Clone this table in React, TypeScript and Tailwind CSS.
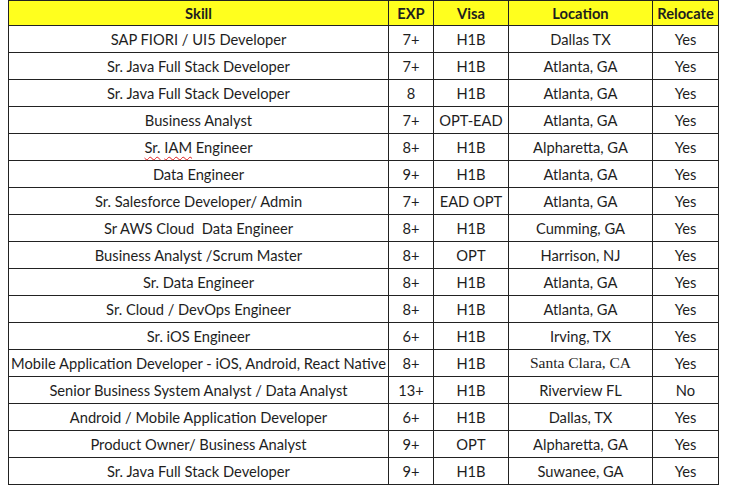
const rows: [string, string, string, string, string][] = [
  ['SAP FIORI / UI5 Developer', '7+', 'H1B', 'Dallas TX', 'Yes'],
  ['Sr. Java Full Stack Developer', '7+', 'H1B', 'Atlanta, GA', 'Yes'],
  ['Sr. Java Full Stack Developer', '8', 'H1B', 'Atlanta, GA', 'Yes'],
  ['Business Analyst', '7+', 'OPT-EAD', 'Atlanta, GA', 'Yes'],
  ['Sr. IAM Engineer', '8+', 'H1B', 'Alpharetta, GA', 'Yes'],
  ['Data Engineer', '9+', 'H1B', 'Atlanta, GA', 'Yes'],
  ['Sr. Salesforce Developer/ Admin', '7+', 'EAD OPT', 'Atlanta, GA', 'Yes'],
  ['Sr AWS Cloud  Data Engineer', '8+', 'H1B', 'Cumming, GA', 'Yes'],
  ['Business Analyst /Scrum Master', '8+', 'OPT', 'Harrison, NJ', 'Yes'],
  ['Sr. Data Engineer', '8+', 'H1B', 'Atlanta, GA', 'Yes'],
  ['Sr. Cloud / DevOps Engineer', '8+', 'H1B', 'Atlanta, GA', 'Yes'],
  ['Sr. iOS Engineer', '6+', 'H1B', 'Irving, TX', 'Yes'],
  ['Mobile Application Developer - iOS, Android, React Native', '8+', 'H1B', 'Santa Clara, CA', 'Yes'],
  ['Senior Business System Analyst / Data Analyst', '13+', 'H1B', 'Riverview FL', 'No'],
  ['Android / Mobile Application Developer', '6+', 'H1B', 'Dallas, TX', 'Yes'],
  ['Product Owner/ Business Analyst', '9+', 'OPT', 'Alpharetta, GA', 'Yes'],
  ['Sr. Java Full Stack Developer', '9+', 'H1B', 'Suwanee, GA', 'Yes'],
]

const cell = 'border border-[#222] px-0 text-center align-middle whitespace-nowrap'

function SkillText({ text }: { text: string }) {
  if (text === 'Sr. IAM Engineer') {
    return (
      <>
        <span className="underline decoration-wavy decoration-[#e02020] decoration-1 underline-offset-[3px]">Sr.</span>{' '}
        <span className="underline decoration-wavy decoration-[#e02020] decoration-1 underline-offset-[3px]">IAM</span> Engineer
      </>
    )
  }
  return <>{text.replace(/  /g, '\u00a0 ')}</>
}

export default function App() {
  return (
    <div className="w-[752px] h-[486px] bg-white overflow-hidden pl-[8px] font-['Lato',sans-serif] text-[14.7px] leading-[18px] text-[#1e1e1e]">
      <table className="border-collapse table-fixed w-[710px]">
        <colgroup>
          <col className="w-[380px]" />
          <col className="w-[45px]" />
          <col className="w-[75px]" />
          <col className="w-[144px]" />
          <col className="w-[66px]" />
        </colgroup>
        <thead>
          <tr className="h-[25px] bg-[#ffff1e] font-bold">
            <th className={cell}>Skill</th>
            <th className={cell}>EXP</th>
            <th className={cell}>Visa</th>
            <th className={cell}>Location</th>
            <th className={cell}>Relocate</th>
          </tr>
        </thead>
        <tbody>
          {rows.map((r, i) => (
            <tr key={i} className="h-[27px]">
              <td className={cell}>
                <SkillText text={r[0]} />
              </td>
              <td className={cell}>{r[1]}</td>
              <td className={cell}>{r[2]}</td>
              <td className={cell + (r[3] === 'Santa Clara, CA' ? " font-['Liberation_Serif',serif] text-[15.5px]" : '')}>{r[3]}</td>
              <td className={cell}>{r[4]}</td>
            </tr>
          ))}
        </tbody>
      </table>
    </div>
  )
}
